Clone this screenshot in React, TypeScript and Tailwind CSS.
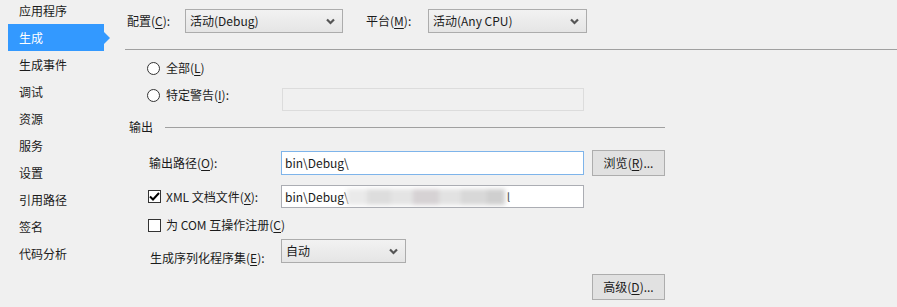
import React from 'react';

const navItems = ['应用程序', '生成', '生成事件', '调试', '资源', '服务', '设置', '引用路径', '签名', '代码分析'];

// label with underlined access key, e.g. 配置(C):
const Key: React.FC<{ pre: string; k: string; post?: string }> = ({ pre, k, post = '' }) => (
  <span className="whitespace-nowrap">
    {pre}(<span className="underline underline-offset-2">{k}</span>){post}
  </span>
);

const Chevron = () => (
  <svg width="9" height="7" viewBox="0 0 9 7" className="shrink-0">
    <polyline points="1,1.5 4.5,5 8,1.5" fill="none" stroke="#555" strokeWidth="2.2" />
  </svg>
);

const Select: React.FC<{ value: string; w: string }> = ({ value, w }) => (
  <div className={`${w} h-[24px] flex items-center justify-between pl-[4px] pr-[7px] border border-[#acacac] bg-gradient-to-b from-[#f2f2f2] to-[#e5e5e5]`}>
    <span className="whitespace-nowrap">{value}</span>
    <Chevron />
  </div>
);

const Radio = () => (
  <span className="w-[13px] h-[13px] rounded-full border border-[#333] bg-white shrink-0" />
);

const Check: React.FC<{ checked?: boolean }> = ({ checked }) => (
  <span className="w-[13px] h-[13px] border border-[#333] bg-white shrink-0 flex items-center justify-center">
    {checked && (
      <svg width="11" height="9" viewBox="0 0 11 9">
        <polyline points="1,4.5 4,7.5 10,1" fill="none" stroke="#000" strokeWidth="2" />
      </svg>
    )}
  </span>
);

const Button: React.FC<{ children: React.ReactNode }> = ({ children }) => (
  <div className="w-[73px] h-[26px] flex items-center justify-center border border-[#adadad] bg-[#e1e1e1]">
    {children}
  </div>
);

export default function App() {
  return (
    <div
      className="w-[897px] h-[307px] flex bg-[#f0f0f0] text-[12px] leading-none text-[#1b1b1b] overflow-hidden"
      style={{ fontFamily: '"Microsoft YaHei", "Noto Sans CJK SC", sans-serif' }}
    >
      {/* sidebar */}
      <div className="w-[110px] shrink-0 -mt-[3px] flex flex-col">
        {navItems.map(item => (
          <div
            key={item}
            className={
              item === '生成'
                ? 'relative ml-[8px] w-[96px] h-[27px] flex items-center pl-[11px] bg-[#3399ff] text-white'
                : 'ml-[8px] w-[96px] h-[27px] flex items-center pl-[11px]'
            }
          >
            {item}
            {item === '生成' && (
              <span className="absolute left-full top-1/2 -translate-y-1/2 w-0 h-0 border-y-[6px] border-y-transparent border-l-[6px] border-l-[#3399ff]" />
            )}
          </div>
        ))}
      </div>

      {/* main */}
      <div className="flex-1 flex flex-col">
        <div className="mt-[9px] pl-[17px] flex items-center">
          <span className="w-[58px]"><Key pre="配置" k="C" post=":" /></span>
          <Select value="活动(Debug)" w="w-[158px]" />
          <span className="ml-[23px] w-[62px]"><Key pre="平台" k="M" post=":" /></span>
          <Select value="活动(Any CPU)" w="w-[159px]" />
        </div>

        <div className="mt-[16px] ml-[15px] h-px bg-[#a0a0a0]" />

        <div className="mt-[8px] h-[20px] pl-[37px] flex items-center gap-[6px]">
          <Radio />
          <Key pre="全部" k="L" />
        </div>

        <div className="mt-[10px] h-[23px] pl-[37px] flex items-start">
          <div className="-mt-px h-[16px] w-[135px] flex items-center gap-[6px]">
            <Radio />
            <Key pre="特定警告" k="I" post=":" />
          </div>
          <div className="w-[302px] h-[23px] border border-[#dcdcdc] bg-[#f0f0f0]" />
        </div>

        <div className="mt-[8px] h-[16px] pl-[19px] flex items-center">
          <span className="w-[36px]">输出</span>
          <div className="w-[500px] h-px bg-[#a0a0a0]" />
        </div>

        <div className="mt-[15px] h-[26px] pl-[39px] flex items-center">
          <span className="w-[132px]"><Key pre="输出路径" k="O" post=":" /></span>
          <div className="w-[303px] h-[24px] flex items-center pl-[3px] border border-[#7eb4ea] bg-white">bin\Debug\</div>
          <div className="ml-[8px]">
            <Button><Key pre="浏览" k="R" post="..." /></Button>
          </div>
        </div>

        <div className="mt-[9px] h-[23px] pl-[38px] flex items-center">
          <div className="w-[133px] flex items-center gap-[5px]">
            <Check checked />
            <span className="whitespace-nowrap">XML 文档文件(<span className="underline underline-offset-2">X</span>):</span>
          </div>
          <div className="w-[303px] h-[23px] flex items-center pl-[3px] border border-[#abadb3] bg-white overflow-hidden">
            <span>bin\Debug\</span>
            <div className="flex h-[16px] blur-[2px] -ml-[2px]">
              <span className="w-[20px] bg-[#eaeaea]" />
              <span className="w-[24px] bg-[#dddddd]" />
              <span className="w-[22px] bg-[#e4e4e4]" />
              <span className="w-[26px] bg-[#d6d2d4]" />
              <span className="w-[22px] bg-[#e2e2e2]" />
              <span className="w-[26px] bg-[#d8d8d8]" />
              <span className="w-[18px] bg-[#cfcfcf]" />
            </div>
            <span className="ml-[2px] text-[#555]">l</span>
          </div>
        </div>

        <div className="mt-[9px] h-[16px] pl-[38px] flex items-center gap-[5px]">
          <Check />
          <span className="whitespace-nowrap">为 COM 互操作注册(<span className="underline underline-offset-2">C</span>)</span>
        </div>

        <div className="mt-[6px] h-[24px] pl-[40px] flex items-start">
          <span className="w-[131px] mt-[13px]"><Key pre="生成序列化程序集" k="E" post=":" /></span>
          <Select value="自动" w="w-[125px]" />
        </div>

        <div className="mt-[11px] pl-[482px]">
          <Button><Key pre="高级" k="D" post="..." /></Button>
        </div>
      </div>
    </div>
  );
}
